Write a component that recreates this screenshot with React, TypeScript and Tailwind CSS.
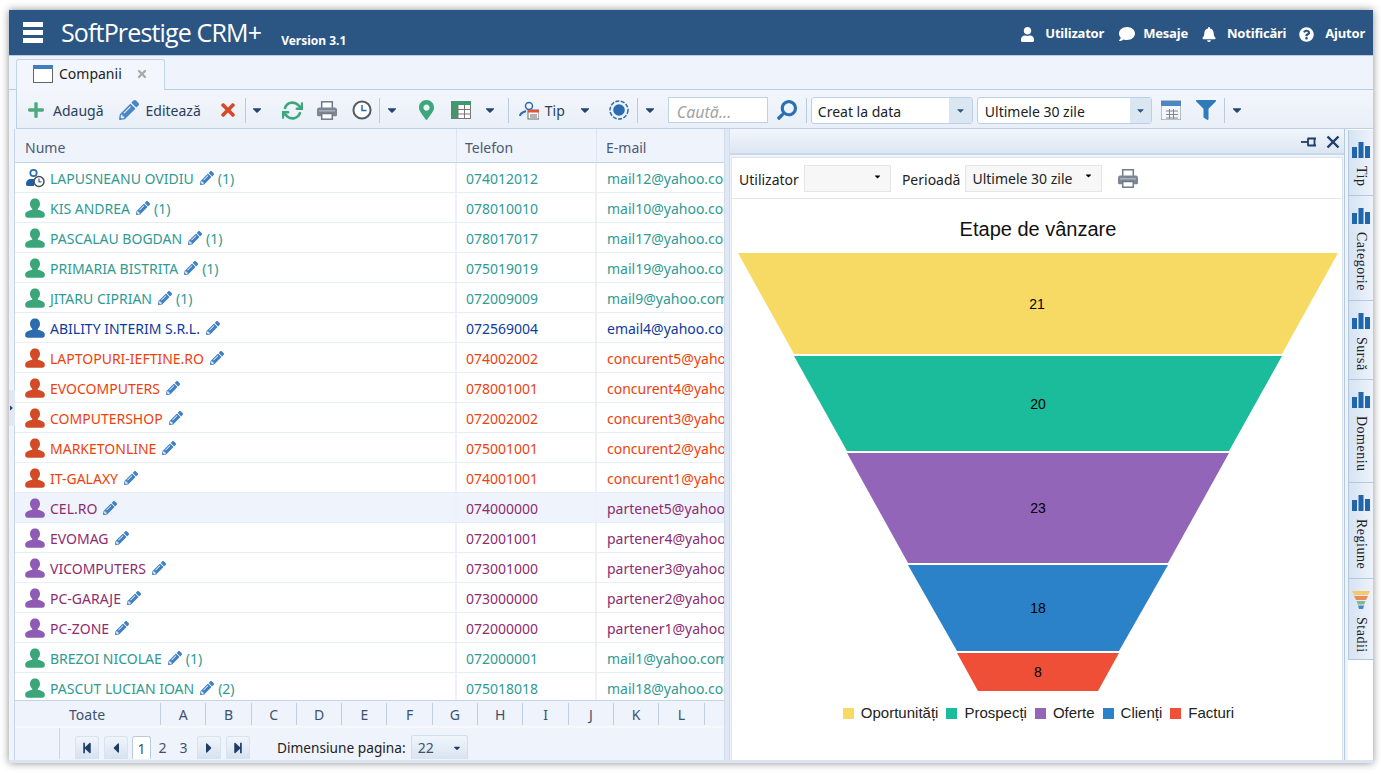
import React from "react";
import { FaUser, FaBell, FaQuestionCircle, FaComment, FaPlus, FaTimes, FaMapMarkerAlt, FaFilter, FaPencilAlt, FaSearch, FaCaretDown, FaStepBackward, FaStepForward, FaCaretLeft, FaCaretRight, FaCaretRight as Arrow } from "react-icons/fa";
import { FiRefreshCw } from "react-icons/fi";

const TEAL = "text-[#2f9a94]";
type Row = { n: string; t: string; e: string; c: string; k: string; m?: string; sel?: boolean; first?: boolean };
const rows: Row[] = [
  { n: "LAPUSNEANU OVIDIU", t: "074012012", e: "mail12@yahoo.com", c: TEAL, k: "#2b6cb0", m: "(1)", first: true },
  { n: "KIS ANDREA", t: "078010010", e: "mail10@yahoo.com", c: TEAL, k: "#3aa67a", m: "(1)" },
  { n: "PASCALAU BOGDAN", t: "078017017", e: "mail17@yahoo.com", c: TEAL, k: "#3aa67a", m: "(1)" },
  { n: "PRIMARIA BISTRITA", t: "075019019", e: "mail19@yahoo.com", c: TEAL, k: "#3aa67a", m: "(1)" },
  { n: "JITARU CIPRIAN", t: "072009009", e: "mail9@yahoo.com", c: TEAL, k: "#3aa67a", m: "(1)" },
  { n: "ABILITY INTERIM S.R.L.", t: "072569004", e: "email4@yahoo.com", c: "text-[#0d3b9c]", k: "#2b6cb0" },
  { n: "LAPTOPURI-IEFTINE.RO", t: "074002002", e: "concurent5@yahoo.com", c: "text-[#ee3f0e]", k: "#d24a26" },
  { n: "EVOCOMPUTERS", t: "078001001", e: "concurent4@yahoo.com", c: "text-[#ee3f0e]", k: "#d24a26" },
  { n: "COMPUTERSHOP", t: "072002002", e: "concurent3@yahoo.com", c: "text-[#ee3f0e]", k: "#d24a26" },
  { n: "MARKETONLINE", t: "075001001", e: "concurent2@yahoo.com", c: "text-[#ee3f0e]", k: "#d24a26" },
  { n: "IT-GALAXY", t: "074001001", e: "concurent1@yahoo.com", c: "text-[#ee3f0e]", k: "#d24a26" },
  { n: "CEL.RO", t: "074000000", e: "partenet5@yahoo.com", c: "text-[#8d2c6f]", k: "#8e5bb5", sel: true },
  { n: "EVOMAG", t: "072001001", e: "partener4@yahoo.com", c: "text-[#8d2c6f]", k: "#8e5bb5" },
  { n: "VICOMPUTERS", t: "073001000", e: "partener3@yahoo.com", c: "text-[#8d2c6f]", k: "#8e5bb5" },
  { n: "PC-GARAJE", t: "073000000", e: "partener2@yahoo.com", c: "text-[#8d2c6f]", k: "#8e5bb5" },
  { n: "PC-ZONE", t: "072000000", e: "partener1@yahoo.com", c: "text-[#8d2c6f]", k: "#8e5bb5" },
  { n: "BREZOI NICOLAE", t: "072000001", e: "mail1@yahoo.com", c: TEAL, k: "#3aa67a", m: "(1)" },
  { n: "PASCUT LUCIAN IOAN", t: "075018018", e: "mail18@yahoo.com", c: TEAL, k: "#3aa67a", m: "(2)" },
];

const Person = ({ color }: { color: string }) => (
  <svg viewBox="0 0 20 20" width="20" height="20">
    <path fill={color} d="M10 .5c3 0 5 2 5 5.500 0 2-1 3.800-2.200 4.700v1c2.500.7 7 1.500 7 4.500v1c0 1.500-1 2.500-2.500 2.500H2.700c-1.500 0-2.500-1-2.500-2.500v-1c0-3 4.500-3.800 7-4.500v-1C6 9.800 5 8 5 6 5 2.500 7 .5 10 .5z" />
  </svg>
);
const PersonClock = () => (
  <svg viewBox="0 0 20 20" width="20" height="20">
    <circle cx="8.500" cy="5" r="3.200" fill="none" stroke="#2b6cb0" strokeWidth="1.700" />
    <path fill="#1f5fa8" d="M1 16c0-3 2-5 5-5h3v7H2.500C1.500 18 1 17 1 16z" />
    <circle cx="14" cy="13.500" r="5" fill="#fff" stroke="#4a4f57" strokeWidth="1.500" />
    <path d="M14 10.500v3.300h2.500" fill="none" stroke="#2b6cb0" strokeWidth="1.200" />
  </svg>
);
const Printer = ({ cls = "" }: { cls?: string }) => (
  <svg className={cls} viewBox="0 0 20 19" width="20" height="19">
    <rect x="4.700" y="0.800" width="10.600" height="7" fill="#fff" stroke="#6f7a86" strokeWidth="1.500" />
    <path d="M2 6.500h16c1 0 2 1 2 2v5.500c0 .8-.6 1.200-1.200 1.200H1.200C.6 15.200 0 14.800 0 14V8.500c0-1 1-2 2-2z" fill="#7c8794" />
    <rect x="2" y="9" width="16" height="1.500" fill="#a9b2bc" />
    <rect x="4.700" y="12.500" width="10.600" height="5.700" fill="#fff" stroke="#6f7a86" strokeWidth="1.500" />
  </svg>
);
const Sep = ({ cls = "" }: { cls?: string }) => <span className={`w-px h-[25px] bg-[#b9cbe0] ${cls}`} />;
const Caret = ({ cls = "" }: { cls?: string }) => <FaCaretDown className={`text-[#24456f] w-[14px] h-[14px] ${cls}`} />;
const Clock = ({ size = 20 }: { size?: number }) => (
  <svg viewBox="0 0 20 20" width={size} height={size}>
    <circle cx="10" cy="10" r="8.600" fill="#fff" stroke="#555a60" strokeWidth="2" />
    <path d="M10 5v5.500h4.500" fill="none" stroke="#2b6cb0" strokeWidth="1.500" />
  </svg>
);
const Bars = () => (
  <svg viewBox="0 0 18 16" width="18" height="16">
    <rect x="0" y="5" width="5" height="11" fill="#2165ab" />
    <rect x="6.500" y="0" width="5" height="16" fill="#2165ab" />
    <rect x="13" y="4" width="5" height="12" fill="#2165ab" />
  </svg>
);
const Tab = ({ label, h, funnel }: { label: string; h: string; funnel?: boolean }) => (
  <div className={`${h} w-[25px] flex flex-col items-center pt-[12px] border-b border-[#b4c9df] bg-gradient-to-r from-[#d6e3f3] to-[#eef3fb] border-l`}>
    {funnel ? (
      <svg viewBox="0 0 18 18" width="18" height="18">
        <path d="M0 0h18l-2 4H2z" fill="#f5c96a" />
        <path d="M2 5h14l-2 4H4z" fill="#ea8a5e" />
        <path d="M4.500 10h9l-1.300 3.500H5.800z" fill="#7fb98a" />
        <path d="M6 14.500h6L11 18H7z" fill="#4a86c5" />
      </svg>
    ) : (
      <Bars />
    )}
    <span className="[writing-mode:vertical-rl] mt-[8px] text-[14px] leading-[16px] text-[#222] font-['Liberation_Serif',serif] tracking-[0.5px]">{label}</span>
  </div>
);
const PagerBtn = ({ children }: { children: React.ReactNode }) => (
  <span className="w-[24px] h-[23px] rounded-t-[3px] border border-b-0 border-[#d9e2ef] bg-gradient-to-b from-[#f1f5fb] to-[#d6e2f1] flex items-center justify-center text-[#1f3d66] text-[12px]">{children}</span>
);

const FUNNEL = [
  { p: "0,0 600,0 544,101 56,101", c: "#f7da64", l: "21", x: 299, y: 51 },
  { p: "56,103 544,103 491,198 109,198", c: "#1abc9c", l: "20", x: 300, y: 151 },
  { p: "109,200 491,200 430,310 170,310", c: "#9365b8", l: "23", x: 300, y: 255 },
  { p: "170,312 430,312 381,398 219,398", c: "#2c82c9", l: "18", x: 300, y: 355 },
  { p: "219,400 381,400 360,438 240,438", c: "#ee4f36", l: "8", x: 300, y: 419 },
];
const LEGEND = [
  ["Oportunități", "bg-[#f7da64]"],
  ["Prospecți", "bg-[#1abc9c]"],
  ["Oferte", "bg-[#9365b8]"],
  ["Clienți", "bg-[#2c82c9]"],
  ["Facturi", "bg-[#ee4f36]"],
];
const LETTERS = ["A", "B", "C", "D", "E", "F", "G", "H", "I", "J", "K", "L"];

export default function App() {
  return (
    <div className="w-[1381px] h-[774px] bg-white overflow-hidden pl-[9px] pt-[10px] font-['Noto_Sans',sans-serif] text-[14px]">
      <div className="w-[1364px] h-[753px] flex flex-col bg-[#eff3fb] border-b-[3px] border-[#dbe5f1] shadow-[0_0_8px_rgba(0,0,0,0.45)]">
        {/* header */}
        <div className="h-[45px] shrink-0 bg-[#2b5583] flex items-center text-white">
          <div className="ml-[14px] w-[20px] flex flex-col gap-[3px]">
            <span className="h-[5px] bg-white" /><span className="h-[5px] bg-white" /><span className="h-[5px] bg-white" />
          </div>
          <span className="ml-[18px] text-[25px] leading-[30px] font-['Open_Sans',sans-serif] tracking-[-0.85px] mb-[2px]">SoftPrestige CRM+</span>
          <span className="ml-[20px] mt-[16px] text-[12px] font-bold font-['Noto_Sans',sans-serif]">Version 3.1</span>
          <div className="ml-auto flex items-center text-[13px] font-bold mr-[8px] tracking-[-0.2px] mt-[3px]">
            <FaUser className="w-[15px] h-[15px]" /><span className="ml-[10px]">Utilizator</span>
            <FaComment className="w-[18px] h-[16px] ml-[14px]" /><span className="ml-[7px]">Mesaje</span>
            <FaBell className="w-[14px] h-[15px] ml-[14px]" /><span className="ml-[11px]">Notificări</span>
            <FaQuestionCircle className="w-[15px] h-[15px] ml-[13px]" /><span className="ml-[11px]">Ajutor</span>
          </div>
        </div>
        {/* tab strip */}
        <div className="h-[35px] shrink-0 border-t border-[#b7cbe1] border-b flex items-end pl-[7px] bg-[#eff3fb]">
          <div className="w-[149px] h-[31px] -mb-px bg-[#f3f6fc] border border-b-0 border-[#c5d5e8] rounded-t-[3px] flex items-center pl-[16px] pb-[3px] text-[#222]">
            <svg viewBox="0 0 20 18" width="20" height="18"><rect x="0.500" y="2" width="19" height="15.500" fill="#fff" stroke="#666" /><rect x="0" y="0" width="20" height="4" fill="#3f7fbf" /></svg>
            <span className="ml-[6px]">Companii</span>
            <FaTimes className="ml-[14px] w-[12px] h-[12px] text-[#a9a9a9]" />
          </div>
        </div>
        {/* toolbar */}
        <div className="h-[39px] shrink-0 ml-[7px] pt-[2px] border-b border-[#bdd0e5] border-l flex items-center text-[#2a3f5f] bg-gradient-to-b from-[#f3f6fc] to-[#e9eff8]">
          <FaPlus className="ml-[10px] w-[18px] h-[18px] text-[#4fa97f]" />
          <span className="ml-[8px]">Adaugă</span>
          <FaPencilAlt className="ml-[15px] w-[20px] h-[20px] text-[#4a86c5]" />
          <span className="ml-[7px]">Editează</span>
          <FaTimes className="ml-[18px] w-[18px] h-[20px] text-[#d9472b]" />
          <Sep cls="ml-[8px]" /><Caret cls="ml-[4px]" />
          <FiRefreshCw className="ml-[18px] w-[21px] h-[21px] text-[#3ca77b] stroke-[3]" />
          <Printer cls="ml-[14px]" />
          <span className="ml-[15px] flex"><Clock /></span>
          <Sep cls="ml-[7px]" /><Caret cls="ml-[5px]" />
          <FaMapMarkerAlt className="ml-[20px] w-[15px] h-[20px] text-[#3ca77b]" />
          <svg className="ml-[17px]" viewBox="0 0 20 18" width="20" height="18"><rect width="20" height="18" fill="#fff" /><rect width="7" height="18" fill="#3f9b6f" /><rect width="20" height="4" fill="#3f9b6f" /><path d="M0 8.500h20M0 13h20M7 4v14M13.500 4v14M19.500 4v14M.5 4v14M0 17.500h20" stroke="#777" strokeWidth="1" fill="none" /></svg>
          <Caret cls="ml-[12px]" />
          <Sep cls="ml-[11px]" />
          <span className="ml-[10px] flex">
            <svg viewBox="0 0 20 20" width="20" height="20"><circle cx="10" cy="6" r="3.500" fill="none" stroke="#2b6cb0" strokeWidth="1.500" /><path d="M1 16c0-3 3-4 6-5M11 11h0" fill="none" stroke="#2b6cb0" strokeWidth="2" /><rect x="9" y="10" width="11" height="9" fill="#fff" stroke="#666" /><rect x="9" y="10" width="11" height="2.500" fill="#e0553a" /><path d="M11 15h7M11 17h7" stroke="#666" strokeWidth="1" /></svg>
          </span>
          <span className="ml-[6px]">Tip</span>
          <Caret cls="ml-[13px]" />
          <svg className="ml-[17px]" viewBox="0 0 20 20" width="20" height="20"><circle cx="10" cy="10" r="9" fill="none" stroke="#2b6cb0" strokeWidth="1.500" strokeDasharray="4 1.500" /><circle cx="10" cy="10" r="5.800" fill="#2b6cb0" /></svg>
          <Sep cls="ml-[8px]" /><Caret cls="ml-[5px]" />
          <div className="ml-[11px] w-[100px] h-[26px] bg-white border border-[#bcd0e6] pl-[8px] text-[16px] leading-[29px] italic text-[#a3a3a3]">Caută...</div>
          <FaSearch className="ml-[9px] w-[20px] h-[20px] text-[#2a6fb5] -scale-x-100" />
          <Sep cls="ml-[9px]" />
          <div className="ml-[4px] w-[162px] h-[27px] bg-white border border-[#bcd0e6] rounded-[3px] flex text-[#222]">
            <span className="flex-1 pl-[6px] leading-[27px]">Creat la data</span>
            <span className="w-[23px] bg-[#dbe6f3] flex items-center justify-center"><FaCaretDown className="w-[11px] h-[11px] text-[#2b5583]" /></span>
          </div>
          <div className="ml-[4px] w-[175px] h-[27px] bg-white border border-[#bcd0e6] rounded-[3px] flex text-[#222]">
            <span className="flex-1 pl-[7px] leading-[27px]">Ultimele 30 zile</span>
            <span className="w-[21px] bg-[#dbe6f3] flex items-center justify-center"><FaCaretDown className="w-[11px] h-[11px] text-[#2b5583]" /></span>
          </div>
          <svg className="ml-[9px]" viewBox="0 0 20 20" width="20" height="20"><rect x="0" y="1" width="20" height="19" fill="#f4f6f9" stroke="#7d8791" /><rect x="0" y="1" width="20" height="5" fill="#4a86c5" /><path d="M5 11h12M5 14.500h12M5 18h12M8.500 9v10M12.500 9v10" stroke="#7d8791" /></svg>
          <FaFilter className="ml-[15px] w-[20px] h-[20px] text-[#2f7ab9]" />
          <Sep cls="ml-[8px]" /><Caret cls="ml-[5px]" />
        </div>
        {/* main */}
        <div className="flex-1 flex min-h-0">
          {/* collapse strip */}
          <div className="w-[6px] shrink-0 border-r border-[#c5d5e8]">
            <div className="mt-[261px] h-[36px] w-[6px] bg-[#dfe8f3] flex items-center"><Arrow className="w-[8px] h-[8px] -ml-[1px] text-[#24456f]" /></div>
          </div>
          {/* grid */}
          <div className="w-[709px] shrink-0 flex flex-col overflow-hidden bg-white">
            <div className="h-[34px] shrink-0 flex bg-[#eff3fb] border-b border-[#c5d5e8] text-[#4a5a74]">
              <div className="w-[442px] pl-[10px] leading-[37px] border-r border-[#dbe4f0]">Nume</div>
              <div className="w-[140px] pl-[8px] leading-[37px] border-r border-[#dbe4f0]">Telefon</div>
              <div className="flex-1 pl-[9px] leading-[37px]">E-mail</div>
            </div>
            <div className="flex-1 overflow-hidden">
              {rows.map((r) => (
                <div key={r.n} className={`h-[30px] flex border-b border-[#e9eef6] ${r.c} ${r.sel ? "bg-[#eff3fb]" : ""}`}>
                  <div className="w-[442px] pl-[10px] pt-[1px] border-r-2 border-[#eef2f8] flex items-center">
                    {r.first ? <PersonClock /> : <Person color={r.k} />}
                    <span className="ml-[5px]">{r.n}</span>
                    <FaPencilAlt className="ml-[6px] w-[14px] h-[14px] text-[#3f7fc4]" />
                    {r.m && <span className="ml-[4px]">{r.m}</span>}
                  </div>
                  <div className="w-[140px] pl-[9px] pt-[1px] border-r-2 border-[#eef2f8] flex items-center">{r.t}</div>
                  <div className="flex-1 pl-[10px] pt-[1px] flex items-center whitespace-nowrap overflow-hidden">{r.e}</div>
                </div>
              ))}
            </div>
            <div className="h-[28px] shrink-0 flex items-center bg-[#eff3fb] border-t border-[#c5d5e8] border-b-2 border-b-[#f6f8fc] text-[#3d5272]">
              <div className="w-[146px] h-[22px] pl-[54px] leading-[23px] border-r border-[#bfcfe2]">Toate</div>
              {LETTERS.map((l) => (
                <div key={l} className="w-[45.300px] h-[22px] text-center leading-[23px] border-r border-[#bfcfe2]">{l}</div>
              ))}
            </div>
            <div className="h-[32px] shrink-0 flex items-end pb-[1px] bg-[#eff3fb] text-[#222]">
              <div className="w-[45px] h-full border-r border-[#c5d5e8]" />
              <div className="ml-[15px] flex items-end">
                <PagerBtn><FaStepBackward /></PagerBtn>
                <span className="w-[5px]" />
                <PagerBtn><FaCaretLeft className="w-[16px] h-[16px]" /></PagerBtn>
                <span className="ml-[4px] w-[19px] h-[23px] bg-white border border-b-0 border-[#b9cbe0] rounded-t-[3px] text-center leading-[24px] text-[#3d5272]">1</span>
                <span className="ml-[6px] w-[11px] h-[23px] text-center leading-[24px] text-[#3d5272]">2</span>
                <span className="ml-[10px] w-[11px] h-[23px] text-center leading-[24px] text-[#3d5272]">3</span>
                <span className="w-[8px]" />
                <PagerBtn><FaCaretRight className="w-[16px] h-[16px]" /></PagerBtn>
                <span className="w-[5px]" />
                <PagerBtn><FaStepForward /></PagerBtn>
              </div>
              <span className="ml-[27px] h-[23px] leading-[24px] text-[13.700px]">Dimensiune pagina:</span>
              <div className="ml-[5px] w-[57px] h-[24px] rounded-t-[3px] border border-b-0 border-[#d3deec] bg-gradient-to-b from-[#f1f5fb] to-[#d9e4f2] flex items-center pl-[6px] text-[#3d5272]">
                <span className="flex-1">22</span><FaCaretDown className="w-[10px] h-[10px] mr-[5px] text-[#1f3d66]" />
              </div>
            </div>
          </div>
          {/* splitter */}
          <div className="w-[6px] shrink-0 bg-[#dfe8f3] border-x border-[#d0dcec]" />
          {/* right panel */}
          <div className="w-[615px] shrink-0 flex flex-col border-r border-[#b4c9df]">
            <div className="h-[26px] shrink-0 pt-[2px] bg-gradient-to-b from-[#f3f6fc] to-[#dbe6f3] border-b-2 border-[#c9d9ea] flex items-center justify-end pr-[4px] text-[#1f3d66]">
              <svg viewBox="0 0 16 12" width="16" height="12"><path d="M0 6h7" stroke="#1f3d66" strokeWidth="1.800" fill="none" /><path d="M6.500 2.500h8.500M6.500 9.500h8.500M7 2.500v7M13.500 2.500v7" stroke="#1f3d66" strokeWidth="1.800" fill="none" /></svg>
              <svg className="ml-[9px]" viewBox="0 0 14 14" width="14" height="14"><path d="M1.500 1.500l11 11M12.500 1.500l-11 11" stroke="#1f3d66" strokeWidth="2.400" fill="none" /></svg>
            </div>
            <div className="flex-1 mx-[1px] mt-[2px] bg-white border border-[#dbe4f0] border-b-0 flex flex-col min-h-0 font-['Liberation_Sans',sans-serif]">
              <div className="h-[41px] shrink-0 border-b border-[#e7e7e7] flex items-center pl-[7px] font-['Noto_Sans',sans-serif] text-[#222]">
                <span className="mt-[2px]">Utilizator</span>
                <div className="ml-[5px] w-[87px] h-[27px] bg-[#f7f7f7] border border-[#e5e5e5] flex items-start justify-end pr-[8px] pt-[6px]"><FaCaretDown className="w-[9px] h-[9px] text-black" /></div>
                <span className="ml-[11px] mt-[2px]">Perioadă</span>
                <div className="ml-[5px] w-[137px] h-[27px] bg-[#f7f7f7] border border-[#e5e5e5] flex items-center pl-[6px]">
                  <span className="flex-1 mt-[1px]">Ultimele 30 zile</span><FaCaretDown className="w-[9px] h-[9px] mr-[8px] mb-[6px] text-black" />
                </div>
                <Printer cls="ml-[16px]" />
              </div>
              <div className="text-center text-[20px] leading-[24px] mt-[18px] pl-[2px] text-[#111]">Etape de vânzare</div>
              <svg className="ml-[6px] mt-[12px]" viewBox="0 0 600 440" width="600" height="440">
                {FUNNEL.map((f) => (
                  <g key={f.l}>
                    <polygon points={f.p} fill={f.c} />
                    <text x={f.x} y={f.y} textAnchor="middle" dominantBaseline="central" fontSize="14" fill="#000" fontFamily="Liberation Sans, sans-serif">{f.l}</text>
                  </g>
                ))}
              </svg>
              <div className="mt-[10px] pl-[3px] flex justify-center items-center text-[15px] leading-[20px] text-[#222]">
                {LEGEND.map(([t, c], i) => (
                  <span key={t} className={`flex items-center ${i ? "ml-[8px]" : ""}`}>
                    <span className={`w-[11px] h-[11px] mr-[7px] ${c}`} />{t}
                  </span>
                ))}
              </div>
            </div>
          </div>
          <div className="w-[3px] shrink-0" />
          {/* vertical tabs */}
          <div className="w-[25px] shrink-0 bg-white pt-[1px] flex flex-col">
            <Tab label="Tip" h="h-[66px]" />
            <Tab label="Categorie" h="h-[105px]" />
            <Tab label="Sursă" h="h-[79px]" />
            <Tab label="Domeniu" h="h-[103px]" />
            <Tab label="Regiune" h="h-[96px]" />
            <Tab label="Stadii" h="h-[81px]" funnel />
          </div>
        </div>
      </div>
    </div>
  );
}
